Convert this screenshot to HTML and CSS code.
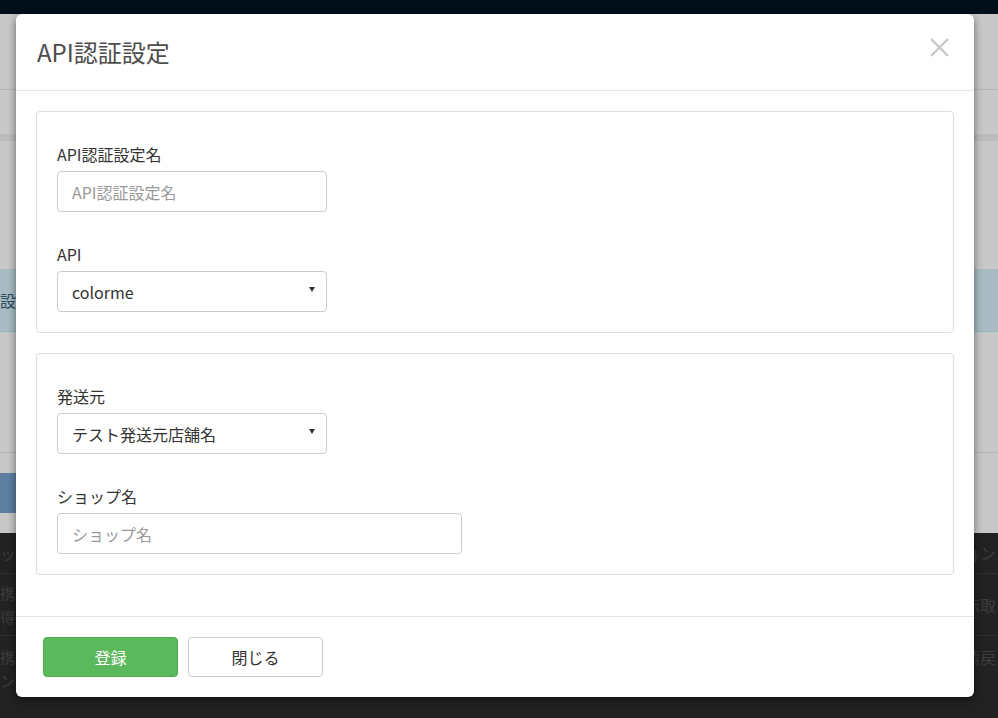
FILE: index.html
```html
<!DOCTYPE html>
<html lang="ja">
<head>
<meta charset="utf-8">
<title>API認証設定</title>
<link rel="stylesheet" href="styles.css">
</head>
<body>
<div class="page">
  <div class="topbar"></div>
  <div class="pg-row pg-a"></div>
  <div class="pg-row pg-b"></div>
  <div class="pg-row pg-c"></div>
  <div class="pg-row pg-d"></div>
  <div class="pg-row pg-info"><span class="side-left">設定</span></div>
  <div class="pg-row pg-e"></div>
  <div class="pg-row pg-f"></div>
  <div class="pg-row pg-g"><div class="pg-btn"></div></div>
  <div class="pg-row pg-h"></div>
  <div class="pg-table">
    <div class="tr tr-head"><span class="side-left">ッ</span><span class="side-right">ョン</span></div>
    <div class="tr tr-1"><div class="side-left stack"><span>携】</span><span>得</span></div><span class="side-right">示取</span></div>
    <div class="tr tr-2"><div class="side-left stack"><span>携】</span><span>ン</span></div><span class="side-right">請戻</span></div>
  </div>
</div>

<div class="modal">
  <div class="modal-header">
    <h4 class="modal-title">API認証設定</h4>
    <svg class="close" width="19" height="19" viewBox="0 0 19 19"><path d="M1 1 L18 18 M18 1 L1 18" stroke="#c6c6c6" stroke-width="2.2" fill="none"/></svg>
  </div>
  <div class="modal-body">
    <div class="panel">
      <div class="form-group">
        <label class="label">API認証設定名</label>
        <input class="control short" type="text" placeholder="API認証設定名">
      </div>
      <div class="form-group">
        <label class="label">API</label>
        <div class="control short select"><span>colorme</span><i class="caret"></i></div>
      </div>
    </div>
    <div class="panel">
      <div class="form-group">
        <label class="label">発送元</label>
        <div class="control short select"><span>テスト発送元店舗名</span><i class="caret"></i></div>
      </div>
      <div class="form-group">
        <label class="label">ショップ名</label>
        <input class="control long" type="text" placeholder="ショップ名">
      </div>
    </div>
  </div>
  <div class="modal-footer">
    <button class="btn btn-success">登録</button>
    <button class="btn btn-default">閉じる</button>
  </div>
</div>
</body>
</html>
```

FILE: styles.css
```css
* { box-sizing: border-box; }
html, body { margin: 0; padding: 0; }
body {
  width: 998px;
  height: 718px;
  overflow: hidden;
  font-family: "Noto Sans CJK JP", "Noto Sans", sans-serif;
  font-size: 16px;
  color: #333;
  background: #222;
}

/* dimmed page behind the dialog */
.page { width: 998px; height: 718px; display: flex; flex-direction: column; }
.topbar { height: 14px; background: #020f19; }
.pg-row { background: #c8c8c8; }
.pg-a { height: 76px; border-bottom: 1px solid #b6b6b6; }
.pg-b { height: 44px; }
.pg-c { height: 7px; background: #bcbcbc; }
.pg-d { height: 128px; }
.pg-info { height: 63px; background: #a9bcc4; border-bottom: 1px solid #8fb7be; display: flex; align-items: center; }
.pg-info .side-left { color: #2c4b5e; }
.pg-e { height: 121px; border-bottom: 1px solid #b2b2b2; }
.pg-f { height: 20px; }
.pg-g { height: 40px; }
.pg-btn { width: 300px; height: 40px; background: #5e7fa0; }
.pg-h { height: 20px; }
.pg-table { flex: 1; background: #222; color: #3c3c3c; }
.tr { border-bottom: 1px solid #2e2e2e; display: flex; justify-content: space-between; align-items: center; }
.tr-head { height: 41px; }
.tr-1 { height: 62px; }
.tr-2 { height: 81px; border-bottom: none; align-items: flex-start; padding-top: 10px; }
.side-left { white-space: nowrap; font-size: 16px; line-height: 22px; }
.stack { display: flex; flex-direction: column; gap: 2px; font-size: 15px; }
.side-right { width: 34px; white-space: nowrap; font-size: 16px; line-height: 22px; }

/* dialog */
.modal {
  position: absolute;
  left: 16px;
  top: 14px;
  width: 958px;
  height: 683px;
  background: #fff;
  border-radius: 6px;
  box-shadow: 0 3px 9px rgba(0, 0, 0, 0.5);
  display: flex;
  flex-direction: column;
}
.modal-header {
  height: 77px;
  padding: 0 25px 0 21px;
  border-bottom: 1px solid #e5e5e5;
  display: flex;
  align-items: center;
  justify-content: space-between;
}
.modal-title {
  margin: 0;
  font-size: 24px;
  font-weight: 400;
  color: #4d4d4d;
  line-height: 34px;
}
.close { display: block; margin-top: -10px; }

.modal-body { padding: 20px 20px 0; height: 525px; }
.panel {
  border: 1px solid #ddd;
  border-radius: 4px;
  padding: 0 20px 20px;
  margin-bottom: 20px;
}
.form-group { padding-top: 30px; }
.label { display: block; line-height: 24px; margin-bottom: 5px; color: #333; }
.control {
  display: block;
  height: 41px;
  border: 1px solid #ccc;
  border-radius: 4px;
  padding: 0 14px;
  font-family: inherit;
  font-size: 16px;
  color: #333;
  background: #fff;
  outline: none;
  margin: 0;
}
.control::placeholder { color: #999; }
.short { width: 270px; }
.long { width: 405px; }
.select { display: flex; align-items: center; justify-content: space-between; padding-right: 11px; }
.caret {
  display: block;
  width: 0;
  height: 0;
  border-left: 3.5px solid transparent;
  border-right: 3.5px solid transparent;
  border-top: 5px solid #333;
  margin-top: -5px;
}

.modal-footer {
  border-top: 1px solid #e5e5e5;
  padding: 20px 27px;
  display: flex;
  gap: 10px;
}
.btn {
  width: 135px;
  height: 40px;
  border-radius: 4px;
  font-family: inherit;
  font-size: 16px;
  margin: 0;
  padding: 0;
}
.btn-success { background: #5cb85c; border: 1px solid #4cae4c; color: #fff; }
.btn-default { background: #fff; border: 1px solid #ccc; color: #333; }
```
